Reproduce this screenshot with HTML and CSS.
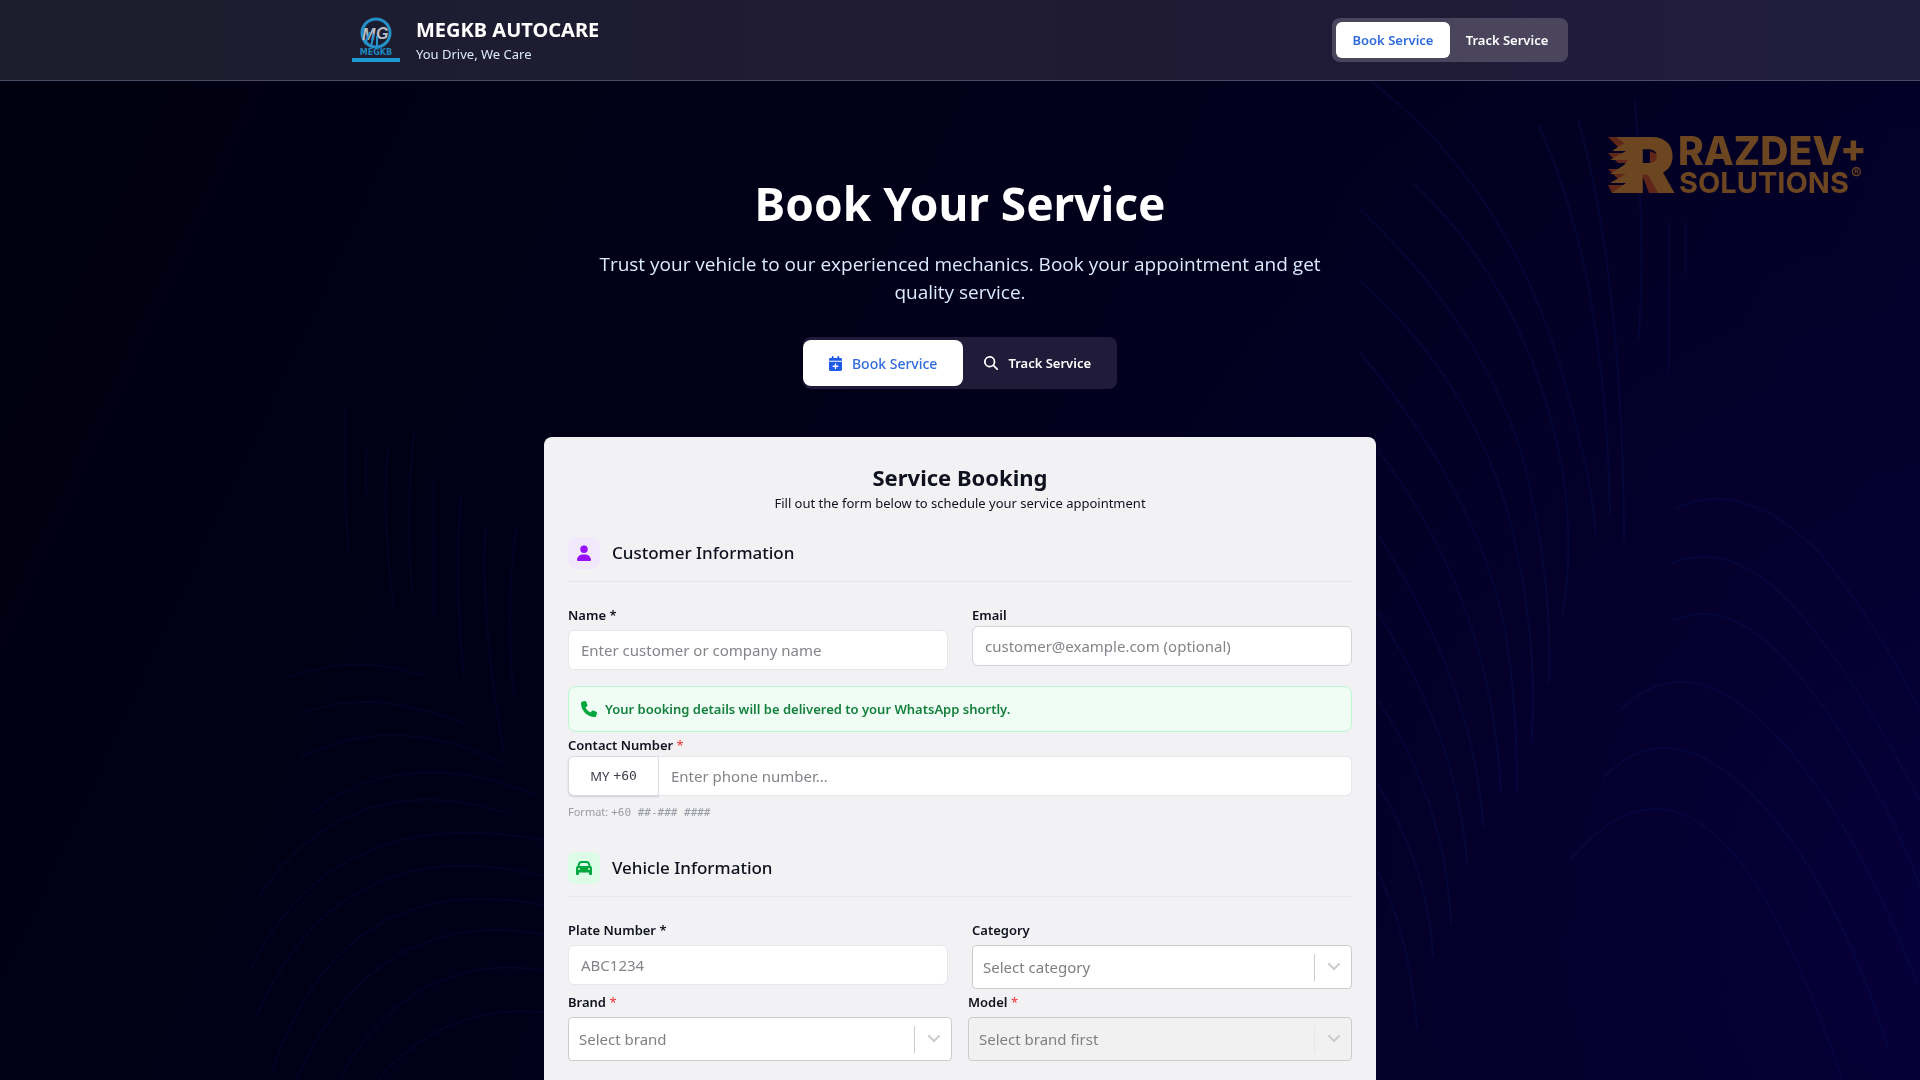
FILE: index.html
```
<!DOCTYPE html>
<html lang="en">
<head>
<meta charset="utf-8">
<meta name="viewport" content="width=device-width, initial-scale=1">
<title>MEGKB AUTOCARE - Book Your Service</title>
<link rel="stylesheet" href="styles.css">
</head>
<body>
<svg class="backdrop" viewBox="0 0 1920 1080" preserveAspectRatio="xMidYMid slice" aria-hidden="true">
  <g transform="translate(1360 60) scale(.357 .65)">
    <path d="M500 100Q690 330 700 700M610 90Q735 330 740 740M770 60Q800 300 780 430M865 250V480M912 250V330"/>
    <path d="M0 20Q400 180 560 470Q650 640 660 730M150 190Q480 360 570 640Q600 760 565 860M0 230Q330 400 450 600Q540 780 530 960M0 340Q330 500 430 730Q500 900 480 1050M0 450Q320 660 400 860Q440 970 440 1130"/>
    <path d="M50 600Q370 830 395 1130M50 730Q320 960 345 1180M50 850Q280 1050 300 1240M50 985Q240 1140 255 1330M50 1115Q190 1240 205 1380M50 1250Q140 1350 160 1490"/>
    <path d="M590 1230Q850 1060 1100 1260Q1230 1370 1350 1568M680 1105Q880 990 1150 1160Q1350 1290 1480 1520M730 1000Q930 890 1200 1060Q1400 1190 1560 1420M880 862Q1050 820 1250 960Q1460 1110 1568 1270M870 775Q1060 730 1260 870Q1420 980 1568 1140M880 690Q1080 640 1290 760Q1440 860 1568 1000"/>
  </g>
  <g class="faint" transform="translate(0 60) scale(.357 .65)">
    <path d="M965 530V640L975 760M1025 600V670M1085 600Q1070 720 1105 850M1160 570Q1135 700 1155 820M1215 640V860M1292 670Q1270 800 1300 950M1360 720Q1345 860 1410 1060M1445 720Q1415 850 1440 980"/>
    <path d="M810 950Q1000 910 1200 950M830 1010Q1030 960 1300 1022M840 1075Q1100 1000 1400 1080M870 1160Q1120 1050 1500 1130M720 1290Q980 1080 1430 1160M700 1400Q930 1140 1520 1200M720 1470Q950 1180 1520 1255M760 1560Q950 1240 1520 1300M830 1568Q1050 1300 1520 1345M950 1568Q1150 1370 1520 1400M1060 1568Q1250 1450 1520 1465"/>
  </g>
</svg>

<svg class="watermark" viewBox="0 0 262 64" role="img" aria-label="RAZDEV+ SOLUTIONS">
  <path class="ember" d="M0 3h24v10H10zM0 19h20v10H10zM0 35h20v10H10zM0 51h22v8H4zM42 17l9 4v8l-9 3zM34 41l7-3 9 21h-9z"/>
  <path d="M8 3h26v56H4l14-10H2l16-9H2l14-9 4-5H2l16-9H4l12-8z"/>
  <text class="mark" x="16" y="59">R</text>
  <text class="line-one" x="70" y="31">RAZDEV+</text>
  <text class="line-two" x="71" y="59">SOLUTIONS</text>
  <text class="reg" x="243" y="45">®</text>
</svg>

<header class="site-header">
  <div class="header-inner">
    <div class="brand">
      <svg class="logo" viewBox="0 0 48 48" role="img" aria-label="MEGKB logo">
        <circle cx="24" cy="17" r="14" fill="#1a1c30" stroke="#2590c8" stroke-width="3"/>
        <text class="logo-m" x="10" y="24">M</text>
        <text class="logo-g" x="24" y="23">G</text>
        <path d="M18 16l-5 12M22 18l-3 12M25 20v11" stroke="#2795cc" stroke-width="2"/>
        <text class="logo-name" x="24" y="39" text-anchor="middle">MEGKB</text>
        <path d="M0 42h48v4H0z" fill="#1c9ad3"/>
      </svg>
      <div>
        <p class="brand-name">MEGKB AUTOCARE</p>
        <p class="brand-tag">You Drive, We Care</p>
      </div>
    </div>
    <nav class="nav-toggle">
      <button type="button" class="nav-btn active">Book Service</button>
      <button type="button" class="nav-btn">Track Service</button>
    </nav>
  </div>
</header>

<main class="main">
  <section class="hero">
    <h1>Book Your Service</h1>
    <p class="lead">Trust your vehicle to our experienced mechanics. Book your appointment and get quality service.</p>
    <div class="hero-toggle">
      <button type="button" class="hero-btn active">
        <svg width="13" height="15" viewBox="0 0 448 512" fill="#1f5be8" aria-hidden="true"><path d="M96 32v32H48C22 64 0 86 0 112v48h448v-48c0-26-22-48-48-48h-48V32a32 32 0 0 0-64 0v32H160V32a32 32 0 0 0-64 0zM448 192H0v272c0 26 22 48 48 48h352c26 0 48-22 48-48zM224 248c13 0 24 11 24 24v56h56a24 24 0 0 1 0 48h-56v56a24 24 0 0 1-48 0v-56h-56a24 24 0 0 1 0-48h56v-56c0-13 11-24 24-24z"/></svg>
        Book Service
      </button>
      <button type="button" class="hero-btn">
        <svg width="14" height="14" viewBox="0 0 512 512" fill="#fff" aria-hidden="true"><path d="M416 208c0 46-15 88-40 123l127 126a32 32 0 0 1-46 46L331 376A208 208 0 1 1 416 208zM208 352a144 144 0 1 0 0-288 144 144 0 0 0 0 288z"/></svg>
        Track Service
      </button>
    </div>
  </section>

  <form class="card">
    <h2>Service Booking</h2>
    <p class="card-sub">Fill out the form below to schedule your service appointment</p>

    <div class="section-head">
      <span class="badge purple">
        <svg width="14" height="16" viewBox="0 0 448 512" fill="#9810fa" aria-hidden="true"><path d="M224 256a120 120 0 1 0 0-240 120 120 0 0 0 0 240zM178 304C80 304 0 384 0 482c0 17 13 30 30 30h388c17 0 30-13 30-30 0-98-80-178-178-178z"/></svg>
      </span>
      <h3>Customer Information</h3>
    </div>

    <div class="row wide">
      <div class="field">
        <label for="name">Name *</label>
        <input id="name" type="text" placeholder="Enter customer or company name">
      </div>
      <div class="field tight outlined">
        <label for="email">Email</label>
        <input id="email" type="email" placeholder="customer@example.com (optional)">
      </div>
    </div>

    <p class="notice">
      <svg width="16" height="16" viewBox="0 0 512 512" fill="#00a63e" aria-hidden="true"><path d="M165 25c-8-19-29-29-48-23L29 26C12 31 0 46 0 64c0 247 201 448 448 448 18 0 33-12 38-29l24-88c5-20-5-40-23-48l-96-40c-16-7-35-2-46 12l-41 49C234 334 178 278 144 207l49-40c14-11 19-30 12-46z"/></svg>
      Your booking details will be delivered to your WhatsApp shortly.
    </p>

    <div class="field tight">
      <label for="phone">Contact Number <span class="req">*</span></label>
      <div class="phone">
        <button type="button" class="country"><span>MY</span><span class="dial">+60</span></button>
        <input id="phone" type="tel" placeholder="Enter phone number...">
      </div>
      <p class="hint">Format: <code>+60 ##-### ####</code></p>
    </div>

    <div class="section-head second">
      <span class="badge green">
        <svg width="16" height="16" viewBox="0 0 512 512" fill="#00a63e" aria-hidden="true"><path d="M135 117l-26 75h294l-26-75c-4-13-17-21-30-21H165c-13 0-26 8-30 21zm-96 80l36-101C89 58 125 32 165 32h182c40 0 76 26 90 64l36 101c23 9 39 32 39 59v192a32 32 0 0 1-32 32h-32a32 32 0 0 1-32-32v-48H96v48a32 32 0 0 1-32 32H32a32 32 0 0 1-32-32V256c0-27 16-50 39-59zM128 288a32 32 0 1 0-64 0 32 32 0 0 0 64 0zm288 32a32 32 0 1 0 0-64 32 32 0 0 0 0 64z"/></svg>
      </span>
      <h3>Vehicle Information</h3>
    </div>

    <div class="row wide">
      <div class="field">
        <label for="plate">Plate Number *</label>
        <input id="plate" type="text" placeholder="ABC1234">
      </div>
      <div class="field">
        <label for="category">Category</label>
        <div class="select">
          <select id="category"><option>Select category</option></select>
          <span class="arrow"><svg width="12" height="8" viewBox="0 0 12 8" aria-hidden="true"><path d="M1 1l5 5 5-5"/></svg></span>
        </div>
      </div>
    </div>

    <div class="row narrow">
      <div class="field">
        <label for="make">Brand <span class="req">*</span></label>
        <div class="select">
          <select id="make"><option>Select brand</option></select>
          <span class="arrow"><svg width="12" height="8" viewBox="0 0 12 8" aria-hidden="true"><path d="M1 1l5 5 5-5"/></svg></span>
        </div>
      </div>
      <div class="field">
        <label for="model">Model <span class="req">*</span></label>
        <div class="select disabled">
          <select id="model" disabled><option>Select brand first</option></select>
          <span class="arrow"><svg width="12" height="8" viewBox="0 0 12 8" aria-hidden="true"><path d="M1 1l5 5 5-5"/></svg></span>
        </div>
      </div>
    </div>
  </form>
</main>
</body>
</html>
```
FILE: styles.css
```
* {
  box-sizing: border-box;
}

body {
  margin: 0;
  min-height: 100vh;
  display: flex;
  flex-direction: column;
  font-family: "Noto Sans", "Open Sans", sans-serif;
  font-size: 15px;
  color: #10111f;
  background:
    radial-gradient(circle at 104% 85%, #06003a 0%, rgba(6, 0, 50, 0.6) 20%, rgba(5, 0, 45, 0) 45%),
    linear-gradient(115deg, #01000f 0%, #02001a 45%, #03002a 100%);
}

h1,
h2,
h3,
p {
  margin: 0;
}

button,
input,
select {
  font-family: inherit;
  margin: 0;
}

button {
  cursor: pointer;
}

/* Decorative layers */
.backdrop {
  position: fixed;
  inset: 0;
  width: 100%;
  height: 100%;
  z-index: -1;
}

.backdrop path {
  fill: none;
  stroke: #0a1258;
  stroke-width: 2;
  vector-effect: non-scaling-stroke;
  opacity: 0.35;
}

.backdrop .faint path {
  opacity: 0.22;
}

.watermark {
  position: fixed;
  top: 134px;
  right: 50px;
  width: 262px;
  height: 64px;
  overflow: visible;
  fill: #6c4521;
  font-family: Inter, sans-serif;
}

.watermark .ember {
  fill: #5f2619;
}

.mark {
  font-size: 77px;
  font-weight: 900;
}

.line-one {
  font-size: 39px;
  font-weight: 800;
}

.line-two {
  font-size: 29px;
  font-weight: 700;
}

.reg {
  font-size: 16px;
  font-weight: 600;
}

/* Header */
.site-header {
  background: linear-gradient(90deg, #1d1d2d, #1f1b35 60%, #201c3c);
  border-bottom: 1px solid #4b4963;
}

.header-inner {
  max-width: 1280px;
  height: 80px;
  margin: 0 auto;
  padding: 0 32px;
  display: flex;
  align-items: center;
  justify-content: space-between;
}

.brand {
  display: flex;
  align-items: center;
  gap: 16px;
}

.logo {
  width: 48px;
  height: 48px;
}

.logo-m,
.logo-g {
  font: italic 900 16px "Liberation Sans", sans-serif;
  fill: #b9bcc8;
}

.logo-name {
  font: 700 8px "DejaVu Sans", sans-serif;
  fill: #1c86bd;
}

.brand-name {
  font-size: 20px;
  line-height: 28px;
  font-weight: 700;
  color: #fff;
}

.brand-tag {
  font-size: 13px;
  line-height: 20px;
  color: #dbeafe;
}

.nav-toggle {
  display: flex;
  padding: 4px;
  border-radius: 8px;
  background: #4a455d;
}

.nav-btn {
  min-width: 114px;
  height: 36px;
  padding: 0 12px;
  border: 0;
  border-radius: 6px;
  background: transparent;
  color: #fff;
  font-size: 13px;
  font-weight: 600;
}

.nav-btn.active {
  background: #fff;
  color: #2f6bdc;
}

/* Hero */
.main {
  flex: 1;
  width: 100%;
  max-width: 832px;
  margin: 0 auto;
  padding-top: 98px;
  display: flex;
  flex-direction: column;
}

.hero {
  display: flex;
  flex-direction: column;
  align-items: center;
  text-align: center;
}

h1 {
  font-size: 46px;
  line-height: 48px;
  font-weight: 700;
  color: #fff;
}

.lead {
  max-width: 768px;
  margin-top: 23px;
  font-family: "Open Sans", sans-serif;
  font-size: 19px;
  line-height: 28px;
  color: #dbeafe;
}

.hero-toggle {
  display: flex;
  margin-top: 31px;
  padding: 3px 0;
  border-radius: 8px;
  background: #1f1b38;
}

.hero-btn {
  display: flex;
  align-items: center;
  gap: 10px;
  height: 46px;
  padding: 0 26px 0 21px;
  border: 0;
  border-radius: 8px;
  background: transparent;
  color: #fff;
  font-size: 13px;
  font-weight: 600;
}

.hero-btn.active {
  padding: 0 26px;
  background: #fff;
  color: #2f6bdc;
  font-size: 14px;
  font-weight: 500;
}

/* Booking card */
.card {
  flex: 1;
  margin-top: 48px;
  padding: 24px 24px 16px;
  border-radius: 8px 8px 0 0;
  background: #f2f2f4;
}

h2 {
  font-size: 22px;
  line-height: 32px;
  font-weight: 700;
  text-align: center;
}

.card-sub {
  font-size: 13px;
  line-height: 20px;
  text-align: center;
}

.section-head {
  display: flex;
  align-items: center;
  gap: 12px;
  margin: 24px 0;
  padding-bottom: 12px;
  border-bottom: 1px solid #e6e7ea;
}

.section-head.second {
  margin-top: 32px;
}

h3 {
  font-size: 17px;
  line-height: 28px;
  font-weight: 500;
}

.badge {
  display: grid;
  place-items: center;
  width: 32px;
  height: 32px;
  border-radius: 8px;
}

.badge.purple {
  background: #f1e8fc;
}

.badge.green {
  background: #dcfce7;
}

.row {
  display: grid;
  grid-template-columns: 1fr 1fr;
}

.row.wide {
  column-gap: 24px;
}

.row.narrow {
  column-gap: 16px;
  margin-top: 4px;
}

.field {
  display: flex;
  flex-direction: column;
  gap: 6px;
}

.field.tight {
  gap: 2px;
}

label {
  font-size: 13px;
  line-height: 18px;
  font-weight: 600;
}

.req {
  color: #fb2c36;
  font-weight: 400;
}

input {
  width: 100%;
  height: 40px;
  padding: 0 12px;
  border: 1px solid #e6e7eb;
  border-radius: 6px;
  background: #fff;
  font-size: 15px;
}

input::placeholder {
  color: #83858a;
  opacity: 1;
}

.outlined input {
  border-color: #d1d3d8;
}

.notice {
  display: flex;
  align-items: center;
  gap: 8px;
  margin: 16px 0 4px;
  padding: 12px;
  border: 1px solid #b9f8cf;
  border-radius: 8px;
  background: #effdf4;
  color: #15803d;
  font-size: 13px;
  line-height: 20px;
  font-weight: 600;
}

.phone {
  display: flex;
}

.phone input {
  border-radius: 0 6px 6px 0;
  border-left: 0;
}

.country {
  flex: none;
  display: flex;
  align-items: center;
  justify-content: center;
  gap: 4px;
  width: 91px;
  border: 1px solid #d9dbe0;
  border-radius: 6px 0 0 6px;
  background: #fff;
  box-shadow: 0 1px 2px rgba(0, 0, 0, 0.15);
  color: #3c3e48;
  font-size: 13px;
}

.dial {
  padding-bottom: 2px;
  font-family: "DejaVu Sans Mono", monospace;
  font-size: 13px;
}

.hint {
  margin-top: 6px;
  font-size: 11px;
  line-height: 15px;
  color: #9a9da6;
}

.hint code {
  font-family: "DejaVu Sans Mono", monospace;
  font-size: 11px;
}

.select {
  display: grid;
  height: 44px;
}

.select select,
.select .arrow {
  grid-area: 1 / 1;
}

.select select {
  appearance: none;
  width: 100%;
  padding: 0 48px 0 10px;
  border: 1px solid #cccccf;
  border-radius: 4px;
  background: #fff;
  color: #808080;
  font-size: 15px;
  opacity: 1;
}

.arrow {
  justify-self: end;
  align-self: center;
  display: grid;
  place-items: center;
  width: 38px;
  height: 27px;
  border-left: 1px solid #ccc;
  pointer-events: none;
}

.arrow path {
  fill: none;
  stroke: #ccc;
  stroke-width: 2;
  stroke-linecap: round;
}

.select.disabled select {
  background: #f1f1f2;
}

.select.disabled .arrow {
  border-color: #e6e6e6;
}
```
